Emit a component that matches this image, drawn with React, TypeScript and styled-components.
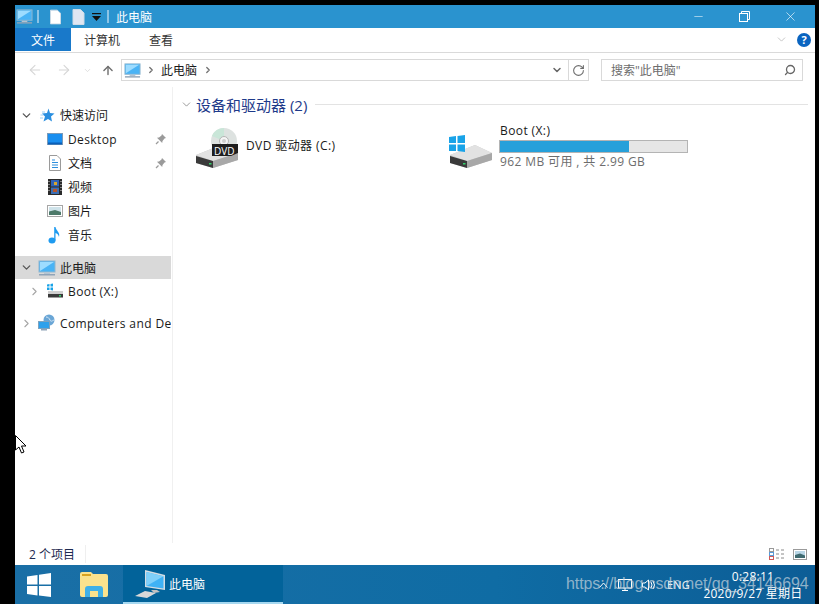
import { ReactNode } from "react";
import styled, { createGlobalStyle } from "styled-components";
import { ArrowLeft, ArrowRight, ArrowUp, ChevronDown, ChevronRight, Minus, RotateCw, Search, X } from "lucide-react";

const GlobalStyle = createGlobalStyle`
  html, body {
    margin: 0;
    padding: 0;
    width: 819px;
    height: 604px;
    overflow: hidden;
    background: #000;
  }
  * { box-sizing: border-box; }
`;

const Screen = styled.div`
  position: relative;
  width: 819px;
  height: 604px;
  padding: 5px 4px 0 15px;
  background: #000;
  font-family: "Open Sans", "Noto Sans CJK SC", sans-serif;
  font-size: 12px;
  color: #1a1a1a;
`;

const Desktop = styled.div`
  display: flex;
  flex-direction: column;
  height: 599px;
  background: #fff;
`;

const TitleBar = styled.div`
  display: flex;
  align-items: center;
  height: 23px;
  padding-left: 1px;
  background: #2a93cf;
  color: #fff;
`;

const TitleSep = styled.span<{ $l: number; $r: number }>`
  width: 2px;
  height: 13px;
  margin: 0 ${({ $r }) => $r}px 0 ${({ $l }) => $l}px;
  background: #8cc4e6;
`;

const QatSpacer = styled.span`
  width: 11px;
`;

const QatDropdown = styled.svg`
  margin-left: 7px;
`;

const WindowButtons = styled.div`
  display: flex;
  align-items: center;
  margin-left: auto;
  padding-right: 2px;
`;

const WindowButton = styled.span`
  display: flex;
  align-items: center;
  justify-content: center;
  width: 46px;
  height: 23px;
`;

const Ribbon = styled.div`
  display: flex;
  align-items: flex-start;
  height: 25px;
  border-bottom: 1px solid #dadada;
`;

const FileTab = styled.div`
  display: flex;
  align-items: center;
  justify-content: center;
  width: 56px;
  height: 23px;
  background: #1979ca;
  color: #fff;
`;

const RibbonTab = styled.div<{ $gap: number }>`
  margin-left: ${({ $gap }) => $gap}px;
  line-height: 25px;
  color: #333;
`;

const RibbonRight = styled.div`
  display: flex;
  align-items: center;
  gap: 9px;
  height: 23px;
  margin-left: auto;
  padding-right: 4px;
`;

const HelpBadge = styled.span`
  display: flex;
  align-items: center;
  justify-content: center;
  width: 14px;
  height: 14px;
  border-radius: 50%;
  background: #0a64c0;
  color: #fff;
  font-size: 11px;
  font-weight: 700;
`;

const NavBar = styled.div`
  display: flex;
  align-items: center;
  height: 34px;
  padding: 0 12px 0 12px;
`;

const NavArrows = styled.div`
  display: flex;
  align-items: center;
  width: 94px;
`;

const NavSlot = styled.span<{ $w: number; $l: number }>`
  display: flex;
  justify-content: center;
  width: ${({ $w }) => $w}px;
  margin-left: ${({ $l }) => $l}px;
`;

const AddressBox = styled.div`
  display: flex;
  align-items: center;
  width: 468px;
  height: 22px;
  border: 1px solid #d9d9d9;
  padding-left: 2px;
`;

const AddressCrumb = styled(ChevronRight)`
  margin-left: 5px;
`;

const AddressText = styled.span`
  margin: 0 6px 0 5px;
`;

const AddressEnd = styled.span`
  display: flex;
  align-items: center;
  margin-left: auto;
  height: 100%;
`;

const RefreshCell = styled.span`
  display: flex;
  align-items: center;
  justify-content: center;
  width: 20px;
  height: 100%;
  margin-left: 5px;
  border-left: 1px solid #d9d9d9;
`;

const SearchBox = styled.div`
  display: flex;
  align-items: center;
  justify-content: space-between;
  width: 202px;
  height: 22px;
  margin-left: 12px;
  padding: 0 6px 0 9px;
  border: 1px solid #d9d9d9;
  color: #6d6d6d;
`;

const SearchGlass = styled(Search)`
  transform: scaleX(-1);
`;

const Body = styled.div`
  display: flex;
  flex: 1;
  min-height: 0;
`;

const Sidebar = styled.div`
  width: 158px;
  padding-top: 16px;
  border-right: 1px solid #f0f0f0;
`;

const NavGroup = styled.div<{ $after: number }>`
  margin-bottom: ${({ $after }) => $after}px;
`;

const NavRow = styled.div<{ $indent: number; $active?: boolean }>`
  display: flex;
  align-items: center;
  width: 156px;
  height: ${({ $active }) => ($active ? 23 : 24)}px;
  padding-left: ${({ $indent }) => $indent}px;
  background: ${({ $active }) => ($active ? "#d9d9d9" : "transparent")};
  white-space: nowrap;
  overflow: hidden;
`;

const Caret = styled.span`
  display: flex;
  justify-content: center;
  flex: none;
  width: 16px;
  margin-right: 3px;
`;

const NavIcon = styled.span`
  display: flex;
  align-items: center;
  justify-content: center;
  flex: none;
  width: 20px;
  height: 20px;
  margin-right: 3px;
`;

const NavLabel = styled.span<{ $latin?: boolean }>`
  flex: 1;
  letter-spacing: ${({ $latin }) => ($latin ? "0.4px" : "0")};
`;

const Pin = styled.span`
  display: flex;
  flex: none;
  width: 14px;
  margin-right: 2px;
`;

const Content = styled.div`
  flex: 1;
  padding: 8px 7px 0 7px;
`;

const GroupHeader = styled.div`
  display: flex;
  align-items: center;
  height: 18px;
`;

const GroupTitle = styled.span`
  margin-left: 3px;
  color: #1e3a8a;
  font-size: 15px;
`;

const GroupLine = styled.span`
  flex: 1;
  height: 1px;
  margin-left: 8px;
  background: #e3e3e3;
`;

const Drives = styled.div`
  display: flex;
  align-items: flex-start;
  margin-top: 14px;
  padding-left: 15px;
`;

const DvdTile = styled.div`
  display: flex;
  align-items: center;
  width: 254px;
  height: 42px;
  gap: 7px;
`;

const DvdLabel = styled.span`
  margin-top: -6px;
  letter-spacing: 0.4px;
`;

const BootTile = styled.div`
  display: flex;
  align-items: flex-end;
  width: 240px;
  height: 47px;
  margin-top: -4px;
  gap: 6px;
`;

const BootIcon = styled.svg`
  margin-bottom: 2px;
`;

const BootInfo = styled.div`
  display: flex;
  flex-direction: column;
  width: 189px;
`;

const BootName = styled.span`
  height: 17px;
  padding-left: 1px;
  line-height: 15px;
  letter-spacing: 0.4px;
`;

const Meter = styled.div`
  height: 13px;
  border: 1px solid #b4b4b4;
  background: #e6e6e6;
`;

const MeterFill = styled.div`
  height: 100%;
  background: #26a0da;
`;

const BootSize = styled.span`
  margin-top: 1px;
  padding-left: 1px;
  color: #6d6d6d;
  line-height: 16px;
  letter-spacing: 0.38px;
`;

const StatusBar = styled.div`
  display: flex;
  align-items: center;
  justify-content: space-between;
  height: 22px;
  padding: 0 8px 0 14px;
`;

const StatusCount = styled.span`
  padding-right: 10px;
  border-right: 1px solid #efefef;
  color: #1e2a50;
`;

const ViewIcons = styled.span`
  display: flex;
  align-items: center;
  gap: 8px;
`;

const Taskbar = styled.div`
  display: flex;
  align-items: stretch;
  height: 39px;
  background: linear-gradient(90deg, #1a6fa6 0%, #0f6ca4 60%, #0c5d96 100%);
  color: #fff;
`;

const StartCell = styled.div`
  display: flex;
  align-items: center;
  justify-content: center;
  width: 48px;
`;

const FolderCell = styled.div`
  display: flex;
  align-items: center;
  justify-content: center;
  width: 60px;
  padding-left: 2px;
`;

const ActiveApp = styled.div`
  display: flex;
  align-items: center;
  gap: 3px;
  width: 160px;
  padding-left: 11px;
  background: #02639a;
  border-bottom: 2px solid #a6d8f0;
`;

const Tray = styled.div`
  display: flex;
  align-items: center;
  gap: 10px;
  margin-left: 316px;
`;

const TrayLang = styled.span`
  width: 25px;
  font-size: 11px;
  letter-spacing: 0.2px;
`;

const Clock = styled.div`
  display: flex;
  flex-direction: column;
  align-items: center;
  flex: none;
  width: 110px;
  margin-left: -4px;
  line-height: 17px;
  letter-spacing: 0.25px;
`;

const Watermark = styled.div`
  position: absolute;
  left: 566px;
  top: 575px;
  color: rgba(195, 210, 220, 0.72);
  font-family: "Liberation Sans", sans-serif;
  font-size: 16px;
  letter-spacing: -0.09px;
  white-space: nowrap;
`;

const Cursor = styled.svg`
  position: absolute;
  left: 15px;
  top: 435px;
`;

const DvdBadge = styled.span`
  position: absolute;
  left: 214px;
  top: 144px;
  color: #fff;
  font-size: 10px;
`;

const Monitor = ({ size = 18 }: { size?: number }) => (
  <svg width={size} height={size} viewBox="0 0 18 18">
    <rect x="1" y="2" width="16" height="11" fill="#49b3f5" stroke="#8fb6cf" />
    <path d="M2 3h14L2 12z" fill="#9ddcff" />
    <rect x="6" y="13.5" width="6" height="1.5" fill="#b3c4d2" />
    <rect x="1" y="15" width="16" height="1.5" fill="#90a4b8" />
  </svg>
);

const TitleDoc = ({ fill, w }: { fill: string; w: number }) => (
  <svg width={w} height="16" viewBox="0 0 12 16">
    <path d="M0.5 0.5H8L11.5 4V15.5H0.5z" fill={fill} stroke="#cfdbe6" />
  </svg>
);

const HardDrive = ({ w, h }: { w: number; h: number }) => (
  <svg width={w} height={h} viewBox="0 0 44 24">
    <path d="M1 11 26 1 43 9V16L18 24 1 19z" fill="#c9c9c9" />
    <path d="M1 11 26 1 43 9 18 17z" fill="#e2e2e2" />
    <path d="M1 12 18 17V24L1 19z" fill="#3a3a3a" />
    <path d="M18 17 43 9V16L18 24z" fill="#a8a8a8" />
    <rect x="14" y="19" width="2.5" height="1.5" fill="#35d06a" />
  </svg>
);

const WinTiles = ({ size, color }: { size: number; color: string }) => (
  <svg width={size} height={size} viewBox="0 0 24 24">
    <path d="M0 3.5 10.5 2V11.5H0z" fill={color} />
    <path d="M12 1.8 24 0V11.5H12z" fill={color} />
    <path d="M0 13H10.5V22.4L0 21z" fill={color} />
    <path d="M12 13H24V24L12 22.6z" fill={color} />
  </svg>
);

const PinIcon = () => (
  <svg width="12" height="12" viewBox="0 0 12 12">
    <path d="M7 1 11 5 9.5 5.5 7.5 8 7.2 10 2 4.8 4 4.5 6.5 2.5z" fill="#9a9a9a" />
    <path d="M3.5 8.5 1 11" stroke="#9a9a9a" strokeWidth="1.2" />
  </svg>
);

const DesktopIcon = () => (
  <svg width="16" height="12" viewBox="0 0 16 12">
    <rect x="0.5" y="0.5" width="15" height="11" fill="#1a8ff0" stroke="#7a9ab8" />
    <rect x="1" y="9.5" width="14" height="2" fill="#0a5fb8" />
  </svg>
);

const DocIcon = () => (
  <svg width="12" height="16" viewBox="0 0 12 16">
    <path d="M0.5 0.5H8L11.5 4V15.5H0.5z" fill="#fff" stroke="#9a9a9a" />
    <path d="M3 5h3M3 7.5h6M3 10h6M3 12.5h6" stroke="#2e8fdc" />
  </svg>
);

const VideoIcon = () => (
  <svg width="14" height="16" viewBox="0 0 14 16">
    <rect width="14" height="16" fill="#2a2a2a" />
    <rect x="3" y="1" width="8" height="6.5" fill="#2f63b8" />
    <rect x="3" y="8.5" width="8" height="6.5" fill="#3c6fb5" />
    <path d="M6 3h3v3H6z" fill="#d9a62e" />
    <path d="M5 10h4v3H5z" fill="#b5562e" />
    <path d="M1 2v1M1 5v1M1 8v1M1 11v1M13 2v1M13 5v1M13 8v1M13 11v1" stroke="#ddd" />
  </svg>
);

const PictureIcon = () => (
  <svg width="16" height="12" viewBox="0 0 16 12">
    <rect x="0.5" y="0.5" width="15" height="11" fill="#fff" stroke="#a6a6a6" />
    <rect x="2" y="2" width="12" height="8" fill="#cfe3ea" />
    <path d="M2 6.5 8 5 14 7V10H2z" fill="#4d7a6a" />
  </svg>
);

const MusicIcon = () => (
  <svg width="14" height="18" viewBox="0 0 14 18">
    <ellipse cx="4" cy="14.5" rx="3.5" ry="3" fill="#1e9bf0" />
    <path d="M6.2 1H7.5C8 5 12.5 6 11 11 10.5 8.5 9 7.5 7.5 7V14.5H6.2z" fill="#1e9bf0" />
  </svg>
);

const StarIcon = () => (
  <svg width="16" height="15" viewBox="0 0 16 15">
    <path d="M9.5 0.5 11 5 15.5 5.5 12 8.5 13 13.5 9 11 4.5 13.5 6 8.5 3 5.5 8 5z" fill="#2a8fe0" />
    <path d="M3 4h3M1.5 7h3M1 10h3" stroke="#9ad0f5" />
  </svg>
);

const SmallBoot = () => (
  <svg width="18" height="16" viewBox="0 0 18 16">
    <path d="M1 1.5 3.5 1V3.5H1zM4.5 1 7 .6V3.5H4.5zM1 4.5H3.5V7H1zM4.5 4.5H7V7.4L4.5 7z" fill="#19a3e8" />
    <rect x="2" y="8" width="15" height="3" fill="#cfcfcf" />
    <rect x="2" y="11" width="15" height="3.5" fill="#3a3a3a" />
    <rect x="13" y="12" width="2" height="1.5" fill="#35d06a" />
  </svg>
);

const NetworkIcon = () => (
  <svg width="18" height="18" viewBox="0 0 18 18">
    <circle cx="11" cy="6" r="5.5" fill="#6aa6d6" />
    <path d="M8 3c2 0 3 1 4 3s2 1 4 0" stroke="#d6e8f5" fill="none" />
    <rect x="0.5" y="7.5" width="11" height="7" fill="#2ea1ec" stroke="#7da3bf" />
    <rect x="3" y="15" width="6" height="1.5" fill="#90a4b8" />
  </svg>
);

const DvdDrive = () => (
  <svg width="44" height="40" viewBox="0 0 44 40">
    <circle cx="29" cy="13" r="13" fill="#dde2e0" />
    <path d="M29 0A13 13 0 0 0 17 8L29 13z" fill="#c9e6d8" />
    <circle cx="29" cy="13" r="4.5" fill="#f5f5f5" stroke="#b5b5b5" />
    <circle cx="29" cy="13" r="2" fill="#cfcfcf" />
    <g transform="translate(0 16)">
      <HardDrive w={44} h={24} />
    </g>
    <path d="M17 16H43V25L36 28H17z" fill="#1f1f1f" />
  </svg>
);

const Laptop = () => (
  <svg width="32" height="30" viewBox="0 0 32 30">
    <path d="M11 1 31 6V21L11 18z" fill="#d5dde3" />
    <path d="M12.5 3 29.5 7.3V19.5L12.5 17z" fill="#3fb2f5" />
    <path d="M12.5 3 29.5 7.3 12.5 17z" fill="#7fd0fa" />
    <path d="M1 27 11 22 22 24 13 29z" fill="#d8d8d8" />
    <path d="M17 21h6l3 2-6 1z" fill="#c2c2c2" />
  </svg>
);

const FolderIcon = () => (
  <svg width="28" height="25" viewBox="0 0 28 25">
    <path d="M0 2Q0 0 2 0H11L13 2H26Q28 2 28 4V23Q28 25 26 25H2Q0 25 0 23z" fill="#fbe28d" />
    <rect x="2" y="2" width="9" height="2" fill="#d9a21f" />
    <path d="M5 25V17Q5 14 8 14H20Q23 14 23 17V25H18V19H10V25z" fill="#3fb0e8" />
  </svg>
);

const Row = ({
  indent,
  caret,
  icon,
  label,
  latin,
  pinned,
  active,
}: {
  indent: number;
  caret?: "open" | "closed";
  icon: ReactNode;
  label: string;
  latin?: boolean;
  pinned?: boolean;
  active?: boolean;
}) => (
  <NavRow $indent={indent} $active={active}>
    <Caret>
      {caret === "open" && <ChevronDown size={13} strokeWidth={2.4} color="#555" />}
      {caret === "closed" && <ChevronRight size={13} strokeWidth={2} color="#a6a6a6" />}
    </Caret>
    <NavIcon>{icon}</NavIcon>
    <NavLabel $latin={latin}>{label}</NavLabel>
    {pinned && (
      <Pin>
        <PinIcon />
      </Pin>
    )}
  </NavRow>
);

export default function App() {
  const usedPercent = 69;
  return (
    <Screen>
      <GlobalStyle />
      <Desktop>
        <TitleBar>
          <Monitor size={17} />
          <TitleSep $l={4} $r={11} />
          <TitleDoc fill="#fff" w={11} />
          <QatSpacer />
          <TitleDoc fill="#dfe6f2" w={13} />
          <QatDropdown width="9" height="8" viewBox="0 0 9 8">
            <rect x="0" y="0" width="9" height="1.2" fill="#111" />
            <path d="M0 3H9L4.5 8z" fill="#111" />
          </QatDropdown>
          <TitleSep $l={6} $r={7} />
          <span>此电脑</span>
          <WindowButtons>
            <WindowButton>
              <Minus size={13} strokeWidth={1} color="#fff" />
            </WindowButton>
            <WindowButton>
              <svg width="11" height="11" viewBox="0 0 11 11" fill="none" stroke="#fff">
                <rect x="0.5" y="2.5" width="8" height="8" />
                <path d="M2.5 2.5V0.5H10.5V8.5H8.5" />
              </svg>
            </WindowButton>
            <WindowButton>
              <X size={15} strokeWidth={1} color="#fff" />
            </WindowButton>
          </WindowButtons>
        </TitleBar>
        <Ribbon>
          <FileTab>文件</FileTab>
          <RibbonTab $gap={13}>计算机</RibbonTab>
          <RibbonTab $gap={29}>查看</RibbonTab>
          <RibbonRight>
            <ChevronDown size={13} strokeWidth={1.2} color="#a8a8a8" />
            <HelpBadge>?</HelpBadge>
          </RibbonRight>
        </Ribbon>
        <NavBar>
          <NavArrows>
            <NavSlot $w={16} $l={0}>
              <ArrowLeft size={16} strokeWidth={1.6} color="#d6d6d6" />
            </NavSlot>
            <NavSlot $w={16} $l={13}>
              <ArrowRight size={16} strokeWidth={1.6} color="#d6d6d6" />
            </NavSlot>
            <NavSlot $w={14} $l={8}>
              <ChevronDown size={9} color="#d6d6d6" />
            </NavSlot>
            <NavSlot $w={14} $l={7}>
              <ArrowUp size={17} strokeWidth={2.4} color="#6e6e6e" />
            </NavSlot>
          </NavArrows>
          <AddressBox>
            <Monitor size={17} />
            <AddressCrumb size={10} strokeWidth={3} color="#707070" />
            <AddressText>此电脑</AddressText>
            <ChevronRight size={10} strokeWidth={3} color="#707070" />
            <AddressEnd>
              <ChevronDown size={12} strokeWidth={3} color="#666" />
              <RefreshCell>
                <RotateCw size={13} strokeWidth={2} color="#6e6e6e" />
              </RefreshCell>
            </AddressEnd>
          </AddressBox>
          <SearchBox>
            搜索"此电脑"
            <SearchGlass size={12} strokeWidth={2.6} color="#666" />
          </SearchBox>
        </NavBar>
        <Body>
          <Sidebar>
            <NavGroup $after={9}>
              <Row indent={3} caret="open" icon={<StarIcon />} label="快速访问" />
              <Row indent={11} icon={<DesktopIcon />} label="Desktop" latin pinned />
              <Row indent={11} icon={<DocIcon />} label="文档" pinned />
              <Row indent={11} icon={<VideoIcon />} label="视频" />
              <Row indent={11} icon={<PictureIcon />} label="图片" />
              <Row indent={11} icon={<MusicIcon />} label="音乐" />
            </NavGroup>
            <NavGroup $after={8}>
              <Row indent={3} caret="open" icon={<Monitor />} label="此电脑" active />
              <Row indent={11} caret="closed" icon={<SmallBoot />} label="Boot (X:)" latin />
            </NavGroup>
            <Row indent={3} caret="closed" icon={<NetworkIcon />} label="Computers and Devices" latin />
          </Sidebar>
          <Content>
            <GroupHeader>
              <ChevronDown size={13} strokeWidth={1.2} color="#666" />
              <GroupTitle>设备和驱动器 (2)</GroupTitle>
              <GroupLine />
            </GroupHeader>
            <Drives>
              <DvdTile>
                <DvdDrive />
                <DvdLabel>DVD 驱动器 (C:)</DvdLabel>
              </DvdTile>
              <BootTile>
                <BootIcon width="44" height="33" viewBox="0 0 44 33">
                  <g transform="translate(0 9)">
                    <HardDrive w={44} h={24} />
                  </g>
                  <path d="M0 2 7 1V8H0zM8.5 1 16 0V8H8.5zM0 9.5H7V16H0zM8.5 9.5H16V17L8.5 16z" fill="#19a3e8" />
                </BootIcon>
                <BootInfo>
                  <BootName>Boot (X:)</BootName>
                  <Meter>
                    <MeterFill style={{ width: `${usedPercent}%` }} />
                  </Meter>
                  <BootSize>962 MB 可用 , 共 2.99 GB</BootSize>
                </BootInfo>
              </BootTile>
            </Drives>
          </Content>
        </Body>
        <StatusBar>
          <StatusCount>2 个项目</StatusCount>
          <ViewIcons>
            <svg width="16" height="12" viewBox="0 0 16 12">
              <rect x="0.5" y="0.5" width="4" height="3" fill="#fff" stroke="#999" />
              <rect x="0.5" y="4.5" width="4" height="3" fill="#fff" stroke="#5a9bd8" />
              <rect x="0.5" y="8.5" width="4" height="3" fill="#fff" stroke="#d05a5a" />
              <path d="M7 2h3M12 2h3M7 6h3M12 6h3M7 10h3M12 10h3" stroke="#8a8a8a" />
            </svg>
            <svg width="14" height="11" viewBox="0 0 14 11">
              <rect x="0.5" y="0.5" width="13" height="10" fill="#fff" stroke="#9a9a9a" />
              <rect x="2" y="2" width="10" height="7" fill="#b9d6e6" />
              <path d="M2 6 7 4.5 12 6.5V9H2z" fill="#3f6a70" />
            </svg>
          </ViewIcons>
        </StatusBar>
        <Taskbar>
          <StartCell>
            <WinTiles size={24} color="#fff" />
          </StartCell>
          <FolderCell>
            <FolderIcon />
          </FolderCell>
          <ActiveApp>
            <Laptop />
            此电脑
          </ActiveApp>
          <Tray>
            <svg width="9" height="6" viewBox="0 0 9 6" fill="none" stroke="#fff">
              <path d="M0.5 5.5 4.5 1 8.5 5.5" />
            </svg>
            <svg width="14" height="12" viewBox="0 0 14 12" fill="none" stroke="#fff">
              <rect x="0.5" y="0.5" width="13" height="8.5" />
              <path d="M7 9v2M4 11.5h6" />
            </svg>
            <svg width="15" height="12" viewBox="0 0 15 12" fill="none" stroke="#fff">
              <path d="M0.5 4H3L6.5 1V11L3 8H0.5z" />
              <path d="M9 3q2 3 0 6M11 2q3 4 0 8" />
            </svg>
            <TrayLang>ENG</TrayLang>
            <Clock>
              <span>0:28:11</span>
              <span>2020/9/27 星期日</span>
            </Clock>
          </Tray>
        </Taskbar>
      </Desktop>
      <DvdBadge>DVD</DvdBadge>
      <Watermark>https://blog.csdn.net/qq_34146694</Watermark>
      <Cursor width="12" height="22" viewBox="0 0 12 22">
        <path d="M0.5 0.5 11 11H6.5L9 17 6.5 18 4 12 0.5 15z" fill="#fff" stroke="#000" />
      </Cursor>
    </Screen>
  );
}
